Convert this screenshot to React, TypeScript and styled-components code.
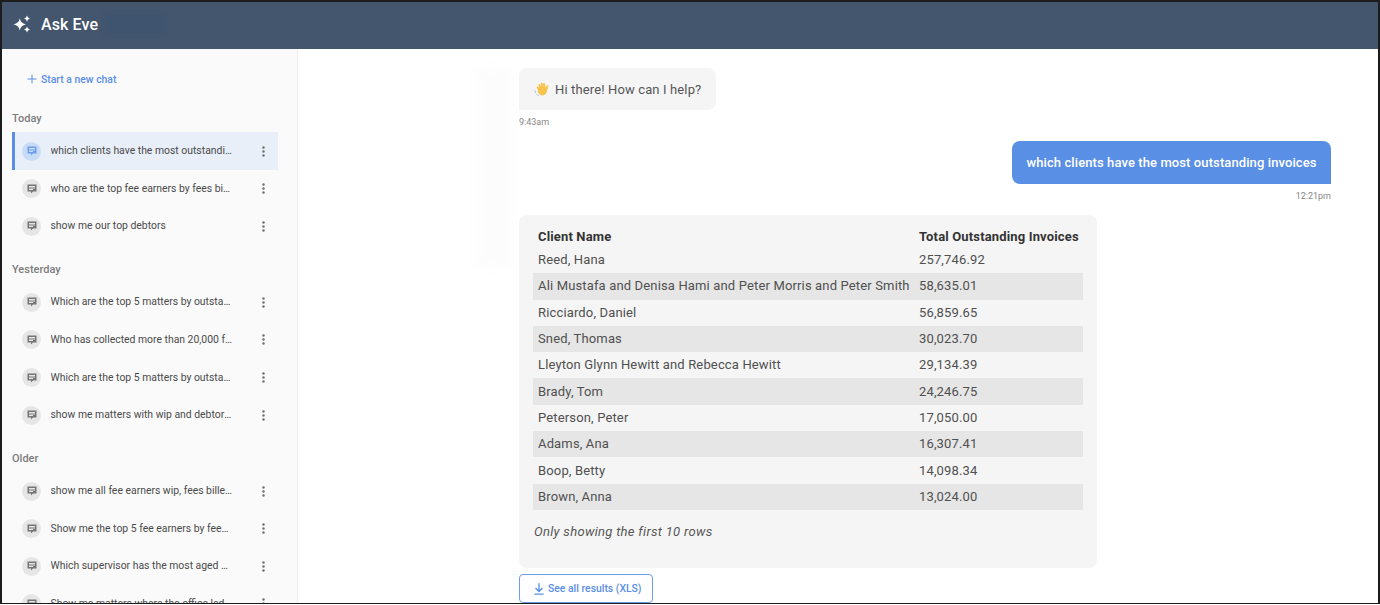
import React from "react";
import styled, { createGlobalStyle } from "styled-components";

const Global = createGlobalStyle`
  html, body { margin: 0; padding: 0; height: 605px; overflow: hidden; background: #fff; }
  * { box-sizing: border-box; }
  body { font-family: Roboto, "Liberation Sans", sans-serif; }
`;

const Frame = styled.div`
  width: 1380px;
  height: 604px;
  border: 2px solid #1c1c1c;
  border-bottom-width: 1px;
  display: flex;
  flex-direction: column;
  overflow: hidden;
  background: #fff;
`;

const Header = styled.header`
  height: 47px;
  flex: none;
  background: #43566e;
  display: flex;
  align-items: center;
  padding: 0 0 3px 11px;
  color: #fff;
`;

const Title = styled.span`
  font-size: 16px;
  font-weight: 500;
  margin-left: 10px;
  letter-spacing: 0.1px;
`;

const Redacted = styled.span`
  width: 58px;
  height: 20px;
  margin-left: 8px;
  background: #3f546f;
  filter: blur(2px);
`;

const Body = styled.div`
  flex: 1;
  min-height: 0;
  display: flex;
`;

const Sidebar = styled.aside`
  width: 296px;
  flex: none;
  background: #fafafa;
  border-right: 1px solid #eeeeee;
  padding: 22px 19px 0 10px;
  overflow: hidden;
`;

const NewChat = styled.div`
  display: flex;
  align-items: center;
  gap: 4px;
  height: 16px;
  padding-left: 15px;
  color: #5c8fe8;
  font-size: 10.4px;
  font-weight: 500;
  margin-bottom: 25px;
`;

const GroupLabel = styled.div`
  font-size: 11px;
  line-height: 14px;
  color: #7d7d7d;
  font-weight: 500;
  margin-bottom: 6.4px;
`;

const Group = styled.section`
  margin-bottom: 18px;
`;

const Row = styled.div<{ $active?: boolean }>`
  height: 37.6px;
  display: flex;
  align-items: center;
  padding-left: ${(p) => (p.$active ? "7px" : "10px")};
  background: ${(p) => (p.$active ? "#e8eff9" : "transparent")};
  border-left: ${(p) => (p.$active ? "3px solid #5b8fe6" : "0")};
`;

const IconCircle = styled.span<{ $active?: boolean }>`
  width: 19px;
  height: 19px;
  flex: none;
  border-radius: 50%;
  display: flex;
  align-items: center;
  justify-content: center;
  background: ${(p) => (p.$active ? "#c9dcf7" : "#e6e6e6")};
  color: ${(p) => (p.$active ? "#6f9fec" : "#757575")};
`;

const RowText = styled.span`
  width: 182px;
  margin-left: 9.5px;
  font-size: 10.4px;
  line-height: 14px;
  color: #4a4a4a;
  white-space: nowrap;
  overflow: hidden;
  text-overflow: ellipsis;
  flex: none;
`;

const Kebab = styled.span`
  margin-left: 29px;
  display: flex;
  color: #6e6e6e;
`;

const Main = styled.main`
  flex: 1;
  min-width: 0;
  position: relative;
  padding: 19px 47px 0 221px;
  overflow: hidden;
`;

const Smudge = styled.div`
  position: absolute;
  left: 178px;
  top: 19px;
  width: 34px;
  height: 200px;
  background: #fcfcfc;
  filter: blur(5px);
`;

const BotBubble = styled.div`
  position: relative;
  width: fit-content;
  height: 42px;
  padding: 0 15px;
  display: flex;
  align-items: center;
  gap: 6px;
  background: #f5f5f5;
  border-radius: 8px 8px 8px 0;
  color: #555;
  font-size: 13px;
  letter-spacing: 0.13px;
`;

const Time = styled.div<{ $right?: boolean }>`
  font-size: 9px;
  line-height: 11px;
  color: #888;
  margin-top: 7px;
  text-align: ${(p) => (p.$right ? "right" : "left")};
`;

const UserBubble = styled.div`
  margin: 13px 0 0 auto;
  width: 319px;
  height: 43px;
  display: flex;
  align-items: center;
  justify-content: center;
  background: #5a8fe6;
  border-radius: 8px 8px 0 8px;
  color: #fff;
  font-size: 13px;
  font-weight: 500;
  letter-spacing: 0.1px;
`;

const Card = styled.div`
  margin-top: 13px;
  width: 578px;
  height: 353px;
  background: #f5f5f5;
  border-radius: 8px;
  padding: 11px 14px 0;
`;

const Table = styled.table`
  width: 550px;
  border-collapse: collapse;
  table-layout: fixed;
  font-size: 13px;
  letter-spacing: 0.15px;
  color: #505050;
`;

const HeadCell = styled.th`
  text-align: left;
  font-weight: 700;
  color: #333;
  height: 21px;
  padding: 0 5px;
  white-space: nowrap;
`;

const DataRow = styled.tr`
  height: 26.3px;
  &:nth-child(even) { background: #e6e6e6; }
`;

const Cell = styled.td`
  padding: 0 5px 1px;
  white-space: nowrap;
`;

const Note = styled.p`
  margin: 12px 0 0 1px;
  font-size: 13px;
  font-style: italic;
  letter-spacing: 0.3px;
  color: #555;
  line-height: 20px;
`;

const XlsButton = styled.button`
  margin-top: 6px;
  width: 134px;
  height: 29px;
  border: 1px solid #6d9ce9;
  border-radius: 4px;
  background: #fff;
  color: #5b8fe6;
  font-family: inherit;
  font-size: 10.4px;
  font-weight: 500;
  display: flex;
  align-items: center;
  gap: 1px;
  padding: 0 0 0 11px;
`;

const Sparkle = () => (
  <svg width="18" height="18" viewBox="0 0 18 18" fill="#fff" aria-hidden>
    <path d="M6.8 3.2Q7.6 8.2 12.8 9.4 7.6 10.4 6.8 15.6 6 10.4.6 9.4 6 8.2 6.8 3.2Z" />
    <path d="M14 .6Q14.4 3 17 3.6 14.4 4.2 14 6.8 13.6 4.2 11 3.6 13.6 3 14 .6Z" />
    <path d="M14 11.4Q14.4 13.8 17 14.4 14.4 15 14 17.6 13.6 15 11 14.4 13.6 13.8 14 11.4Z" />
  </svg>
);

const Plus = () => (
  <svg width="10" height="10" viewBox="0 0 10 10" stroke="#5c8fe8" strokeWidth="1" aria-hidden>
    <path d="M5 .5v9M.5 5h9" />
  </svg>
);

const Chat = () => (
  <svg width="12" height="12" viewBox="0 0 24 24" fill="currentColor" aria-hidden>
    <path
      fillRule="evenodd"
      d="M21 3H3v14h7v4l4-4h7V3ZM6 6h12v2H6V6Zm0 3h12v2H6V9Zm0 3h8v2H6v-2Z"
    />
  </svg>
);

const Dots = () => (
  <svg width="3" height="11" viewBox="0 0 3 11" fill="currentColor" aria-hidden>
    <circle cx="1.5" cy="1.5" r="1.2" />
    <circle cx="1.5" cy="5.5" r="1.2" />
    <circle cx="1.5" cy="9.5" r="1.2" />
  </svg>
);

const Wave = () => (
  <svg width="15" height="14" viewBox="0 0 15 14" aria-hidden>
    <path d="M.8 8.5 1.8 11M3 12.6l1.6.8" stroke="#a9c7ee" strokeWidth="1" fill="none" strokeLinecap="round" />
    <circle cx="8.4" cy="8.8" r="4.6" fill="#f7c34a" />
    <g stroke="#f7c34a" strokeWidth="1.9" strokeLinecap="round" fill="none">
      <path d="M5 7.4 3.6 5.4" />
      <path d="M6.6 6 5.4 3" />
      <path d="M8.6 5.4 7.6 1.6" />
      <path d="M10.6 5.6 10 2" />
      <path d="M12.2 8 13.4 4.2" />
    </g>
  </svg>
);

const Download = () => (
  <svg width="16" height="16" viewBox="0 0 24 24" fill="currentColor" aria-hidden>
    <path d="M5 20.5h14v-1.8H5v1.8Zm8-17h-2v9.7L7.5 9.7 6 11.2l6 6 6-6-1.5-1.5-3.5 3.5V3.5Z" />
  </svg>
);

const groups = [
  {
    label: "Today",
    items: [
      "which clients have the most outstanding invoices",
      "who are the top fee earners by fees billed this month",
      "show me our top debtors",
    ],
  },
  {
    label: "Yesterday",
    items: [
      "Which are the top 5 matters by outstanding debtors",
      "Who has collected more than 20,000 fees this year",
      "Which are the top 5 matters by outstanding wip",
      "show me matters with wip and debtors over 10,000",
    ],
  },
  {
    label: "Older",
    items: [
      "show me all fee earners wip, fees billed and collected",
      "Show me the top 5 fee earners by fees billed",
      "Which supervisor has the most aged debtors and wip",
      "Show me matters where the office ledger is overdrawn",
    ],
  },
];

const rows = [
  ["Reed, Hana", "257,746.92"],
  ["Ali Mustafa and Denisa Hami and Peter Morris and Peter Smith", "58,635.01"],
  ["Ricciardo, Daniel", "56,859.65"],
  ["Sned, Thomas", "30,023.70"],
  ["Lleyton Glynn Hewitt and Rebecca Hewitt", "29,134.39"],
  ["Brady, Tom", "24,246.75"],
  ["Peterson, Peter", "17,050.00"],
  ["Adams, Ana", "16,307.41"],
  ["Boop, Betty", "14,098.34"],
  ["Brown, Anna", "13,024.00"],
];

export default function App() {
  return (
    <Frame>
      <Global />
      <Header>
        <Sparkle />
        <Title>Ask Eve</Title>
        <Redacted />
      </Header>
      <Body>
        <Sidebar>
          <NewChat>
            <Plus />
            Start a new chat
          </NewChat>
          {groups.map((g) => (
            <Group key={g.label}>
              <GroupLabel>{g.label}</GroupLabel>
              {g.items.map((item, i) => {
                const active = g.label === "Today" && i === 0;
                return (
                  <Row key={item} $active={active}>
                    <IconCircle $active={active}>
                      <Chat />
                    </IconCircle>
                    <RowText>{item}</RowText>
                    <Kebab>
                      <Dots />
                    </Kebab>
                  </Row>
                );
              })}
            </Group>
          ))}
        </Sidebar>
        <Main>
          <Smudge />
          <BotBubble>
            <Wave />
            Hi there! How can I help?
          </BotBubble>
          <Time>9:43am</Time>
          <UserBubble>which clients have the most outstanding invoices</UserBubble>
          <Time $right>12:21pm</Time>
          <Card>
            <Table>
              <colgroup>
                <col style={{ width: 381 }} />
                <col />
              </colgroup>
              <thead>
                <tr>
                  <HeadCell>Client Name</HeadCell>
                  <HeadCell>Total Outstanding Invoices</HeadCell>
                </tr>
              </thead>
              <tbody>
                {rows.map(([name, total]) => (
                  <DataRow key={name}>
                    <Cell>{name}</Cell>
                    <Cell>{total}</Cell>
                  </DataRow>
                ))}
              </tbody>
            </Table>
            <Note>Only showing the first 10 rows</Note>
          </Card>
          <XlsButton>
            <Download />
            See all results (XLS)
          </XlsButton>
        </Main>
      </Body>
    </Frame>
  );
}
